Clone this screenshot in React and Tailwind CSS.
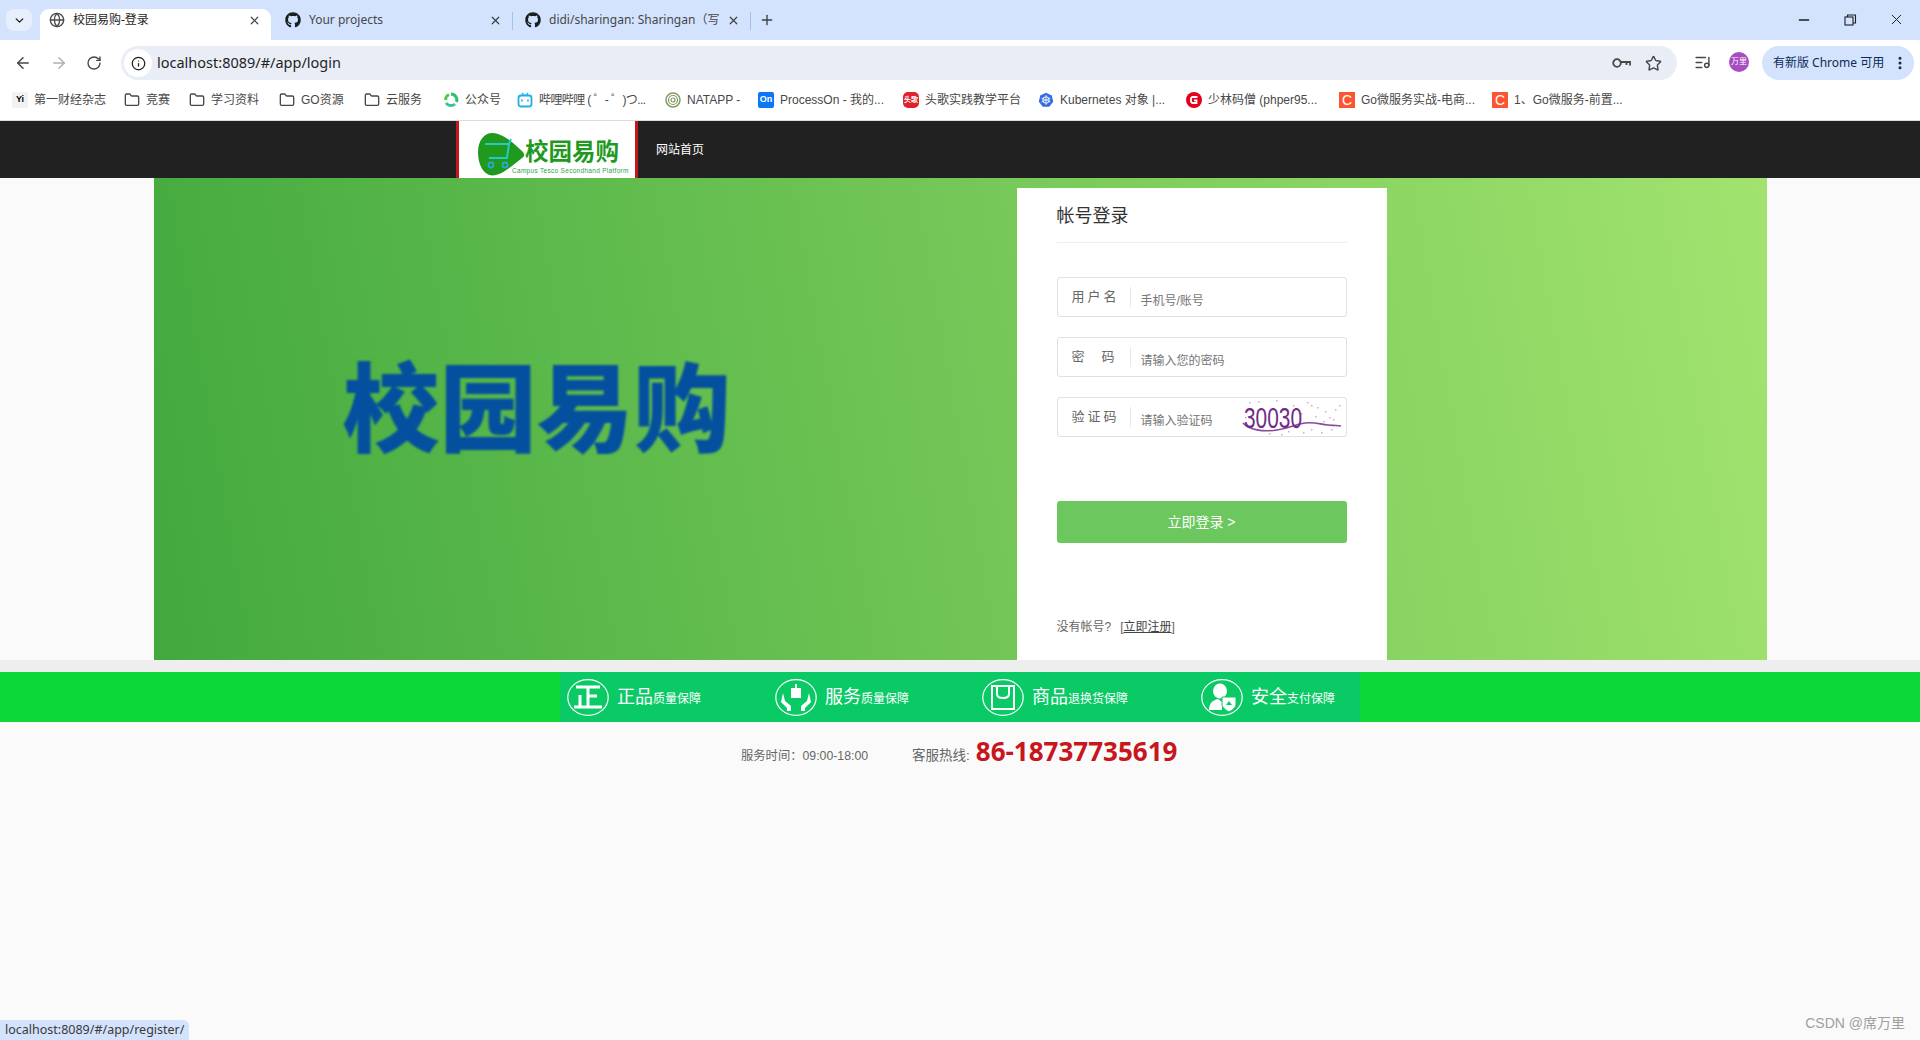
import { ArrowLeft, ArrowRight, ChevronDown, EllipsisVertical, Folder, Globe, Info, ListMusic, Minus, Plus, RotateCw, Star, X } from "lucide-react";
import { FaGithub } from "react-icons/fa";

const cjk = "font-['Liberation_Sans','Noto_Sans_CJK_SC',sans-serif]";
const chromeFont = "font-['Noto_Sans','Noto_Sans_CJK_SC',sans-serif]";

function Square({ className, children }) {
  return <span className={`flex h-4 w-4 shrink-0 items-center justify-center text-[9px] font-bold text-white ${className}`}>{children}</span>;
}

const bookmarks = [
  { icon: <Square className="bg-[#f2f2f2] !text-black">Yi</Square>, label: "第一财经杂志", w: "w-[74px]" },
  { icon: <Folder size={16} className="text-[#474747]" />, label: "竞赛", w: "w-[27px]" },
  { icon: <Folder size={16} className="text-[#474747]" />, label: "学习资料", w: "w-[52px]" },
  { icon: <Folder size={16} className="text-[#474747]" />, label: "GO资源", w: "w-[47px]" },
  { icon: <Folder size={16} className="text-[#474747]" />, label: "云服务", w: "w-[41px]" },
  {
    icon: (
      <svg width="16" height="16" viewBox="0 0 16 16" fill="none" strokeWidth="3">
        <path d="M8 2 A6 6 0 0 1 13.5 10" stroke="#2fbf71" />
        <path d="M12 12 A6 6 0 0 1 3 11" stroke="#35c6a0" />
        <path d="M2.5 8 A6 6 0 0 1 6 2.5" stroke="#57c84d" />
      </svg>
    ),
    label: "公众号",
    w: "w-[36px]",
  },
  {
    icon: (
      <svg width="16" height="16" viewBox="0 0 16 16" fill="none">
        <path d="M5 1l2 2.5M11 1L9 3.5" stroke="#20b0e3" strokeWidth="1.3" />
        <rect x="1.5" y="3.5" width="13" height="11" rx="2.5" stroke="#20b0e3" strokeWidth="1.8" />
        <path d="M5 7.5v2M11 7.5v2" stroke="#20b0e3" strokeWidth="1.6" />
      </svg>
    ),
    label: "哔哩哔哩 ( ゜- ゜)つ...",
    w: "w-[110px] tracking-[-0.6px]",
  },
  {
    icon: (
      <svg width="16" height="16" viewBox="0 0 16 16" fill="none" stroke="#7f9a63">
        <circle cx="8" cy="8" r="7" strokeWidth="1.5" />
        <circle cx="8" cy="8" r="4.5" strokeWidth="1.2" />
        <circle cx="8" cy="8" r="2" strokeWidth="1.2" />
      </svg>
    ),
    label: "NATAPP -",
    w: "w-[55px]",
  },
  { icon: <Square className="rounded-[2px] bg-[#0a78f5]">On</Square>, label: "ProcessOn - 我的...", w: "w-[107px]" },
  { icon: <Square className="rounded-[5px] bg-[#e0202a] !text-[7px]">头歌</Square>, label: "头歌实践教学平台", w: "w-[97px]" },
  {
    icon: (
      <svg width="16" height="16" viewBox="0 0 16 16">
        <path d="M8 .8l5.8 2.8 1.4 6.2-4 5H4.8l-4-5 1.4-6.2z" fill="#326ce5" />
        <circle cx="8" cy="8" r="3.2" fill="none" stroke="#fff" strokeWidth="1" />
        <path d="M8 3v10M3.5 6l9 4M12.5 6l-9 4" stroke="#fff" strokeWidth=".7" />
      </svg>
    ),
    label: "Kubernetes 对象 |...",
    w: "w-[110px]",
  },
  {
    icon: (
      <svg width="16" height="16" viewBox="0 0 16 16" fill="none">
        <circle cx="8" cy="8" r="8" fill="#e2001a" />
        <path d="M11.5 5H6.3L5 6.2v3.6L6.3 11h4.2V8.3H8" stroke="#fff" strokeWidth="1.8" />
      </svg>
    ),
    label: "少林码僧 (phper95...",
    w: "w-[115px]",
  },
  { icon: <Square className="bg-[#fc5531] !text-[14px] !font-normal">C</Square>, label: "Go微服务实战-电商...", w: "w-[115px]" },
  { icon: <Square className="bg-[#fc5531] !text-[14px] !font-normal">C</Square>, label: "1、Go微服务-前置...", w: "w-[111px]" },
];

const services = [
  { big: "正品", small: "质量保障", w: "w-[208px]", icon: "zheng" },
  { big: "服务", small: "质量保障", w: "w-[207px]", icon: "hands" },
  { big: "商品", small: "退换货保障", w: "w-[219px]", icon: "bag" },
  { big: "安全", small: "支付保障", w: "w-[150px]", icon: "user" },
];

function ServiceIcon({ kind }) {
  return (
    <svg width="42" height="37" viewBox="0 0 42 37" fill="none" className="shrink-0">
      <ellipse cx="21" cy="18.5" rx="20.2" ry="17.8" stroke="#fff" strokeWidth="1.2" />
      {kind === "zheng" && <path d="M9 8h24M21 8v20M21 17h9M13 16v12M7 28h28" stroke="#fff" strokeWidth="3" />}
      {kind === "hands" && (
        <g>
          <rect x="16" y="9" width="10" height="10" fill="#fff" />
          <path d="M21 5v4" stroke="#fff" strokeWidth="2" />
          <path d="M8 14l2 8 6 5v5h-4v-3l-6-6zM34 14l-2 8-6 5v5h4v-3l6-6z" fill="#fff" />
        </g>
      )}
      {kind === "bag" && <path d="M10 7h22v23H10zM15 7v8c0 3 3 4 6 4s6-1 6-4V7" stroke="#fff" strokeWidth="2" />}
      {kind === "user" && (
        <g>
          <ellipse cx="19" cy="12" rx="7" ry="7.5" fill="#fff" />
          <path d="M8 31c0-7 4-10 9-11l4 3v8z" fill="#fff" />
          <path d="M21 18h14v7c0 4-4 6-7 8-3-2-7-4-7-8z" fill="#fff" stroke="#0aca66" />
          <path d="M28 22l3 4h-6z" fill="#0aca66" />
        </g>
      )}
    </svg>
  );
}

function Captcha() {
  const dots = [
    [8, 3], [17, 2], [35, 1], [66, 3], [76, 8], [84, 12], [94, 10], [98, 6], [82, 22], [70, 30], [62, 33], [55, 28],
    [28, 34], [40, 35], [74, 17], [88, 18], [90, 30], [4, 18], [52, 6], [60, 14], [80, 33], [47, 32], [70, 6], [92, 20],
  ];
  return (
    <svg width="104" height="37" viewBox="0 0 104 37" className="mr-[1px] shrink-0">
      {dots.map(([x, y], i) => (
        <rect key={i} x={x} y={y} width="1.5" height="1.5" fill="#b583c8" opacity=".7" />
      ))}
      <path d="M2 24c6 7 20 9 34 7s18-6 28-7 14 1 23 2 9 0 13 1" fill="none" stroke="#8a4a9c" strokeWidth="1.6" />
      <text x="3" y="29" fontSize="29" fontFamily="'Liberation Sans', sans-serif" fill="#6f2c86" textLength="58" lengthAdjust="spacingAndGlyphs">30030</text>
    </svg>
  );
}

function Field({ label, placeholder, labelClass, children }) {
  return (
    <div className="flex h-[40px] items-center rounded-[3px] border border-[#e0e0e0] bg-white">
      <span className={`flex w-[72px] shrink-0 whitespace-nowrap pl-[14px] text-[13px] text-[#666] ${labelClass}`}>{label}</span>
      <span className="h-[20px] w-px shrink-0 bg-[#e8e8e8]" />
      <input
        placeholder={placeholder}
        className="h-full min-w-0 flex-1 bg-transparent pl-[10px] pt-[7px] text-[12px] outline-none placeholder:text-[#757575]"
      />
      {children}
    </div>
  );
}

function Tab({ title, icon, w, active, dim }) {
  return (
    <div className={`flex h-[31px] items-center pb-[9px] ${w} ${active ? "rounded-t-[9px] bg-white pl-[9px] pr-[10px]" : "pl-[13px] pr-[10px]"}`}>
      {icon}
      <span className={`ml-[8px] min-w-0 flex-1 overflow-hidden whitespace-nowrap text-[12px] ${chromeFont} ${dim ? "text-[#474747]" : "text-[#1f1f1f]"}`}>{title}</span>
      <X size={13} className="shrink-0 text-[#3c4043]" strokeWidth={2.2} />
    </div>
  );
}

export default function App() {
  return (
    <div className={`relative flex h-[1040px] w-full flex-col overflow-hidden bg-[#fafafa] ${cjk}`}>
      {/* tab strip */}
      <div className="flex h-[40px] shrink-0 items-end bg-[#d3e3fd]">
        <div className="mb-[9px] ml-[6px] mr-[8px] flex h-[22px] w-[26px] items-center justify-center rounded-[8px] bg-[#e8effc]">
          <ChevronDown size={13} strokeWidth={2.5} className="text-[#1f1f1f]" />
        </div>
        <Tab active w="w-[231px]" title="校园易购-登录" icon={<Globe size={16} className="shrink-0 text-[#4a4a4a]" />} />
        <Tab dim w="w-[241px]" title="Your projects" icon={<FaGithub size={16} className="ml-[1px] shrink-0 text-[#1b1f23]" />} />
        <span className="mb-[10px] h-[18px] w-px bg-[#a8c0e6]" />
        <Tab dim w="w-[237px]" title="didi/sharingan: Sharingan（写" icon={<FaGithub size={16} className="-ml-[1px] shrink-0 text-[#1b1f23]" />} />
        <span className="mb-[10px] h-[18px] w-px bg-[#a8c0e6]" />
        <Plus size={16} className="mb-[12px] ml-[8px] text-[#3c4043]" />
        <div className="mb-[12px] ml-auto flex items-center gap-[30px] pr-[15px]">
          <Minus size={16} className="text-[#1f1f1f]" />
          <svg width="16" height="16" viewBox="0 0 16 16" fill="none" stroke="#1f1f1f" strokeWidth="1.1">
            <rect x="3" y="5" width="8" height="8" />
            <path d="M5.5 5V3h8v8h-2.5" />
          </svg>
          <X size={17} strokeWidth={1.4} className="text-[#1f1f1f]" />
        </div>
      </div>

      {/* toolbar */}
      <div className="flex h-[40px] shrink-0 items-end rounded-tr-[8px] bg-white">
        <div className="mb-[8px] flex w-[121px] shrink-0 items-center gap-[18px] pl-[14px]">
          <ArrowLeft size={18} className="text-[#474747]" />
          <ArrowRight size={18} className="text-[#b0b0b0]" />
          <RotateCw size={16} className="text-[#474747]" />
        </div>
        <div className="flex h-[34px] w-[1556px] shrink-0 items-center rounded-full bg-[#e9eef6] pr-[15px]">
          <span className="ml-[3px] flex h-[28px] w-[28px] items-center justify-center rounded-full bg-white">
            <Info size={15} className="text-[#1f1f1f]" />
          </span>
          <span className={`ml-[5px] text-[14.5px] text-[#1f1f1f] ${chromeFont}`}>localhost:8089/#/app/login</span>
          <div className="ml-auto flex items-center gap-[14px]">
            <svg width="19" height="12" viewBox="0 0 19 12" fill="none" stroke="#474747" strokeWidth="1.8">
              <circle cx="5" cy="6" r="3.8" />
              <path d="M9 5h9v3.5M14.5 5v3" />
            </svg>
            <Star size={17} strokeWidth={2} className="text-[#474747]" />
          </div>
        </div>
        <div className="mb-[8px] ml-[17px] flex items-center">
          <ListMusic size={17} className="text-[#474747]" />
          <span className="ml-[18px] flex h-[20px] w-[20px] items-center justify-center rounded-full bg-[#a94cc0] text-[8px] text-white">万里</span>
        </div>
        <div className={`ml-[13px] flex h-[34px] w-[152px] items-center rounded-full bg-[#d3e3fd] pl-[11px] text-[12px] text-[#0b2a55] ${chromeFont}`}>
          <span className="whitespace-nowrap">有新版 Chrome 可用</span>
          <EllipsisVertical size={16} strokeWidth={2.5} className="ml-auto mr-[6px] text-[#0b2a55]" />
        </div>
      </div>

      {/* bookmarks */}
      <div className="flex h-[41px] shrink-0 items-center gap-[16px] border-b border-[#dcdcdc] bg-white pl-[12px]">
        {bookmarks.map((b) => (
          <div key={b.label} className="flex shrink-0 items-center gap-[6px]">
            {b.icon}
            <span className={`${b.w} overflow-hidden whitespace-nowrap text-[12px] text-[#474747]`}>{b.label}</span>
          </div>
        ))}
      </div>

      {/* site header */}
      <div className="flex h-[57px] shrink-0 items-center bg-[#212121] pl-[456px]">
        <div className="flex h-full w-[182px] flex-col border-x-[3px] border-[#c4161c] bg-white pl-[19px]">
          <div className="flex h-[56px] items-center">
            <svg width="46" height="44" viewBox="0 0 46 44" className="mt-[10px] shrink-0">
              <path d="M0 20C0 6 9-2 20 2c9 3 18 11 24 17 3 3 3 5 0 7-8 6-16 14-26 17C7 46 0 34 0 20z" fill="#1f9a1f" />
              <path d="M7 12h24l-2 14H11M31 12l2-5" fill="none" stroke="#27c8c8" strokeWidth="2" />
              <circle cx="13" cy="33" r="2.6" fill="none" stroke="#2ea7e0" strokeWidth="1.6" />
              <circle cx="27" cy="33" r="2.6" fill="none" stroke="#2ea7e0" strokeWidth="1.6" />
            </svg>
            <div className="ml-[1px] flex flex-col">
              <span className="mt-[16px] whitespace-nowrap text-[23.5px] font-bold leading-[26px] text-[#1f9a1f]">校园易购</span>
              <span className="-ml-[13px] mt-[1px] whitespace-nowrap text-[6.5px] leading-[9px] tracking-[0.3px] text-[#2c9f4a]">Campus Tesco Secondhand Platform</span>
            </div>
          </div>
        </div>
        <span className="ml-[18px] text-[12px] text-white">网站首页</span>
      </div>

      {/* hero */}
      <div className="mx-auto flex h-[482px] w-[1613px] shrink-0 bg-[linear-gradient(80deg,#42a93e,#a2e36f)]">
        <div className="flex w-[863px] shrink-0 items-center">
          <span className="mb-[36px] ml-[189px] whitespace-nowrap font-['Noto_Sans_CJK_SC',sans-serif] text-[97px] font-black leading-none text-[#04509f] blur-[1.2px]">校园易购</span>
        </div>
        <div className="mt-[10px] flex w-[370px] shrink-0 flex-col bg-white px-[40px]">
          <div className="flex h-[55px] shrink-0 items-start border-b border-[#eee] pt-[16px] text-[18px] leading-[24px] text-[#333]">帐号登录</div>
          <div className="mt-[34px] flex flex-col gap-[20px]">
            <Field label="用户名" labelClass="tracking-[3px]" placeholder="手机号/账号" />
            <Field label="密码" labelClass="tracking-[17px]" placeholder="请输入您的密码" />
            <Field label="验证码" labelClass="tracking-[3px]" placeholder="请输入验证码">
              <Captcha />
            </Field>
          </div>
          <button className="mt-[64px] h-[42px] shrink-0 rounded-[3px] bg-[#6cc75e] text-[14px] text-white">立即登录 &gt;</button>
          <div className="mt-[75px] text-[12px] text-[#666]">
            没有帐号?
            <span className="ml-[9px]">[<span className="text-[#444] underline">立即注册</span>]</span>
          </div>
        </div>
      </div>

      {/* gray band + promise bar */}
      <div className="h-[12px] shrink-0 bg-[#eeeeee]" />
      <div className="flex h-[50px] shrink-0 justify-center bg-[#0cd83a]">
        <div className="flex w-[800px] items-center bg-[#0aca66] pl-[7px]">
          {services.map((s) => (
            <div key={s.big + s.small} className={`flex shrink-0 items-center ${s.w}`}>
              <ServiceIcon kind={s.icon} />
              <span className="ml-[8px] text-[18px] text-white">{s.big}</span>
              <span className="mt-[3px] whitespace-nowrap text-[12px] text-white">{s.small}</span>
            </div>
          ))}
        </div>
      </div>

      {/* service line */}
      <div className="flex h-[58px] shrink-0 items-center pl-[741px] text-[#666]">
        <span className="mt-[11px] w-[171px] shrink-0 whitespace-nowrap text-[12.3px]">服务时间：09:00-18:00</span>
        <span className="mt-[11px] text-[13.5px]">客服热线:</span>
        <span className="ml-[6px] font-['Open_Sans',sans-serif] text-[26px] font-bold leading-none text-[#c8161d]">86-18737735619</span>
      </div>

      {/* status bubble + watermark overlay */}
      <div className={`absolute bottom-0 left-0 flex h-[20px] w-[189px] items-center rounded-tr-[6px] bg-[#d3e3fd] pl-[5px] text-[12.5px] text-[#3a3a3a] ${chromeFont}`}>localhost:8089/#/app/register/</div>
      <div className="absolute bottom-[6px] right-[15px] text-[14px] text-[#a0a0a0]">CSDN @席万里</div>
    </div>
  );
}
